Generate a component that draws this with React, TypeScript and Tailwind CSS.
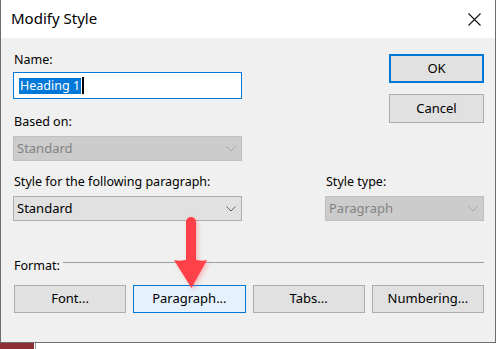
const font = { fontFamily: '"Noto Sans", "Liberation Sans", sans-serif' };

const Chevron = ({ disabled }: { disabled?: boolean }) => (
    <svg width="10" height="6" viewBox="0 0 10 6" className="shrink-0">
        <path
            d="M0.5 0.5 L5 5 L9.5 0.5"
            fill="none"
            stroke={disabled ? "#a6a6a6" : "#606060"}
            strokeWidth="1"
        />
    </svg>
);

const Select = ({
    value,
    disabled,
    className = "",
}: {
    value: string;
    disabled?: boolean;
    className?: string;
}) => (
    <div
        className={`h-[25px] flex items-center justify-between pl-[3px] pr-[5px] border ${
            disabled
                ? "bg-[#cccccc] border-[#bfbfbf] text-[#838383]"
                : "bg-[#e1e1e1] border-[#adadad] text-black"
        } ${className}`}
    >
        <span>{value}</span>
        <Chevron disabled={disabled} />
    </div>
);

const Button = ({
    label,
    className = "",
}: {
    label: string;
    className?: string;
}) => (
    <div
        className={`flex items-center justify-center bg-[#e1e1e1] border border-[#adadad] ${className}`}
    >
        {label}
    </div>
);

const RedArrow = () => (
    <svg
        width="44"
        height="84"
        viewBox="0 0 44 84"
        className="absolute left-[168px] top-[212px] drop-shadow-[2px_2px_2px_rgba(255,80,80,0.35)]"
    >
        <path d="M22 10 L22 52" stroke="#fe4148" strokeWidth="10" strokeLinecap="round" />
        <path d="M5 48 Q14 50 22 46 Q30 50 38 48 L22.5 76 Z" fill="#fe4148" />
    </svg>
);

export default function App() {
    return (
        <div className="w-[497px] h-[349px] bg-white overflow-hidden text-[12.5px] text-black" style={font}>
            <div className="relative w-[496px] h-[343px] flex flex-col border-x border-b border-[#6e6e6e] bg-[#f0f0f0]">
                {/* title bar */}
                <div className="h-[38px] shrink-0 bg-white flex items-center justify-between pl-[10px] pr-[14px]">
                    <span className="text-[15px] text-black -mt-[1px]">Modify Style</span>
                    <svg width="13" height="13" viewBox="0 0 13 13">
                        <path d="M0.5 0.5 L12.5 12.5 M12.5 0.5 L0.5 12.5" stroke="#111" strokeWidth="1.1" />
                    </svg>
                </div>

                <div className="flex-1 pl-[12px] pr-[11px] pt-[14px]">
                    <div className="flex justify-between">
                        <div className="w-[229px] flex flex-col">
                            <label className="leading-[16px] pl-[1px]">Name:</label>
                            <div className="mt-[4px] h-[27px] bg-white border border-[#0078d7] flex items-center pl-[5px]">
                                <span className="bg-[#0078d7] text-white leading-[16px] px-[1px] text-[12.5px]">
                                    Heading 1
                                </span>
                                <span className="w-[2px] h-[17px] bg-black ml-[1px]" />
                            </div>
                            <label className="mt-[15px] leading-[16px] pl-[1px]">Based on:</label>
                            <Select value="Standard" disabled className="mt-[6px] text-[13px]" />
                        </div>
                        <div className="w-[95px] flex flex-col gap-[11px] pt-[2px]">
                            <div className="h-[29px] flex items-center justify-center bg-[#e1e1e1] border-2 border-[#0078d7] text-[13px]">
                                OK
                            </div>
                            <Button label="Cancel" className="h-[29px] text-[13px]" />
                        </div>
                    </div>

                    <div className="flex justify-between mt-[13px]">
                        <div className="w-[229px] flex flex-col">
                            <label className="leading-[16px] pl-[1px]">Style for the following paragraph:</label>
                            <Select value="Standard" className="mt-[6px] text-[13px]" />
                        </div>
                        <div className="w-[159px] flex flex-col">
                            <label className="leading-[16px] pl-[1px]">Style type:</label>
                            <Select value="Paragraph" disabled className="mt-[6px] text-[13px]" />
                        </div>
                    </div>

                    <div className="flex items-center mt-[35px] h-[16px]">
                        <span className="pl-[1px] leading-[16px] mt-[4px]">Format:</span>
                        <div className="flex-1 h-px bg-[#a0a0a0] ml-[3px] -mt-[4px]" />
                    </div>

                    <div className="flex gap-[7px] mt-[13px] pl-[1px] text-[13px]">
                        <Button label="Font..." className="w-[113px] h-[28px]" />
                        <div className="w-[113px] h-[28px] flex items-center justify-center bg-[#e5f1fb] border border-[#0078d7]">
                            Paragraph...
                        </div>
                        <Button label="Tabs..." className="w-[113px] h-[28px]" />
                        <Button label="Numbering..." className="w-[113px] h-[28px]" />
                    </div>
                </div>

                <RedArrow />
            </div>
            <div className="flex h-[6px]">
                <div className="w-[34px] bg-[#8c2f33]" />
                <div className="w-px bg-[#9a9a9a] ml-[1px]" />
            </div>
        </div>
    );
}
